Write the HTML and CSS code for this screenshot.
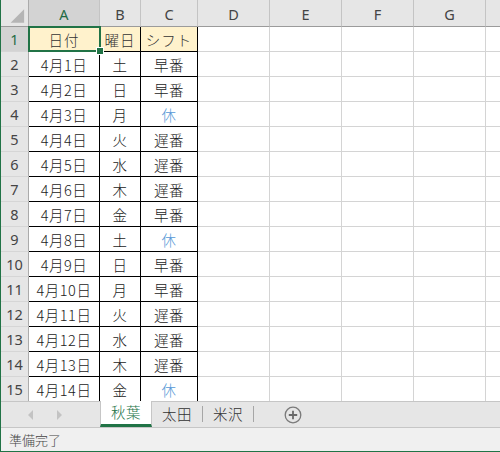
FILE: index.html
```html
<!DOCTYPE html>
<html lang="ja">
<head>
<meta charset="utf-8">
<link rel="stylesheet" href="styles.css">
</head>
<body>
<div class="window">
  <div class="sheet">
    <div class="grid">
      <div class="corner"><svg width="28" height="26" viewBox="0 0 28 26"><polygon points="24,9 24,23 10,23" fill="#b5b5b5"/></svg></div>
      <div class="ch sel">A</div><div class="ch">B</div><div class="ch">C</div><div class="ch">D</div><div class="ch">E</div><div class="ch">F</div><div class="ch">G</div><div class="ch last"></div>

      <div class="rh sel">1</div><div class="c t hd">日付</div><div class="c t hd">曜日</div><div class="c t hd">シフト</div><div class="c"></div><div class="c"></div><div class="c"></div><div class="c"></div><div class="c last"></div>
      <div class="rh">2</div><div class="c t">4月1日</div><div class="c t">土</div><div class="c t">早番</div><div class="c"></div><div class="c"></div><div class="c"></div><div class="c"></div><div class="c last"></div>
      <div class="rh">3</div><div class="c t">4月2日</div><div class="c t">日</div><div class="c t">早番</div><div class="c"></div><div class="c"></div><div class="c"></div><div class="c"></div><div class="c last"></div>
      <div class="rh">4</div><div class="c t">4月3日</div><div class="c t">月</div><div class="c t off">休</div><div class="c"></div><div class="c"></div><div class="c"></div><div class="c"></div><div class="c last"></div>
      <div class="rh">5</div><div class="c t">4月4日</div><div class="c t">火</div><div class="c t">遅番</div><div class="c"></div><div class="c"></div><div class="c"></div><div class="c"></div><div class="c last"></div>
      <div class="rh">6</div><div class="c t">4月5日</div><div class="c t">水</div><div class="c t">遅番</div><div class="c"></div><div class="c"></div><div class="c"></div><div class="c"></div><div class="c last"></div>
      <div class="rh">7</div><div class="c t">4月6日</div><div class="c t">木</div><div class="c t">遅番</div><div class="c"></div><div class="c"></div><div class="c"></div><div class="c"></div><div class="c last"></div>
      <div class="rh">8</div><div class="c t">4月7日</div><div class="c t">金</div><div class="c t">早番</div><div class="c"></div><div class="c"></div><div class="c"></div><div class="c"></div><div class="c last"></div>
      <div class="rh">9</div><div class="c t">4月8日</div><div class="c t">土</div><div class="c t off">休</div><div class="c"></div><div class="c"></div><div class="c"></div><div class="c"></div><div class="c last"></div>
      <div class="rh">10</div><div class="c t">4月9日</div><div class="c t">日</div><div class="c t">早番</div><div class="c"></div><div class="c"></div><div class="c"></div><div class="c"></div><div class="c last"></div>
      <div class="rh">11</div><div class="c t">4月10日</div><div class="c t">月</div><div class="c t">早番</div><div class="c"></div><div class="c"></div><div class="c"></div><div class="c"></div><div class="c last"></div>
      <div class="rh">12</div><div class="c t">4月11日</div><div class="c t">火</div><div class="c t">遅番</div><div class="c"></div><div class="c"></div><div class="c"></div><div class="c"></div><div class="c last"></div>
      <div class="rh">13</div><div class="c t">4月12日</div><div class="c t">水</div><div class="c t">遅番</div><div class="c"></div><div class="c"></div><div class="c"></div><div class="c"></div><div class="c last"></div>
      <div class="rh">14</div><div class="c t">4月13日</div><div class="c t">木</div><div class="c t">遅番</div><div class="c"></div><div class="c"></div><div class="c"></div><div class="c"></div><div class="c last"></div>
      <div class="rh">15</div><div class="c t">4月14日</div><div class="c t">金</div><div class="c t off">休</div><div class="c"></div><div class="c"></div><div class="c"></div><div class="c"></div><div class="c last"></div>
    </div>
    <div class="selection"><span class="handle"></span></div>
  </div>

  <div class="tabbar">
    <div class="nav">
      <svg width="6" height="10" viewBox="0 0 6 10"><polygon points="5,0 5,10 0,5" fill="#c3c3c3"/></svg>
      <svg width="6" height="10" viewBox="0 0 6 10"><polygon points="1,0 1,10 6,5" fill="#c3c3c3"/></svg>
    </div>
    <div class="tab active">秋葉</div>
    <div class="tab">太田</div>
    <div class="sep"></div>
    <div class="tab">米沢</div>
    <div class="sep"></div>
    <div class="add">
      <svg width="18" height="18" viewBox="0 0 18 18"><circle cx="9" cy="9" r="7.8" fill="none" stroke="#7a7a7a" stroke-width="1.3"/><path d="M9 4.8V13.2M4.8 9H13.2" stroke="#6a6a6a" stroke-width="1.8"/></svg>
    </div>
  </div>

  <div class="status">準備完了</div>
</div>
</body>
</html>
```

FILE: styles.css
```css
html, body {
  margin: 0;
  padding: 0;
}

body {
  width: 500px;
  height: 452px;
  overflow: hidden;
  background: #ffffff;
  font-family: "Noto Sans CJK JP", "Noto Sans", sans-serif;
}

.window {
  box-sizing: border-box;
  width: 500px;
  height: 452px;
  border-left: 1px solid #217346;
  border-bottom: 1px solid #217346;
  display: flex;
  flex-direction: column;
}

.sheet {
  position: relative;
  height: 401px;
  overflow: hidden;
}

.grid {
  display: grid;
  grid-template-columns: 28px 71px 41px 57px 72px 72px 72px 72px 1fr;
  grid-template-rows: 27px repeat(15, 25px);
}

.grid > div {
  box-sizing: border-box;
  display: flex;
  align-items: center;
  justify-content: center;
}

.corner {
  background: #e6e6e6;
  border-right: 1px solid #ababab;
  border-bottom: 1px solid #9b9b9b;
  align-items: flex-start !important;
  justify-content: flex-start !important;
}

.corner svg {
  display: block;
}

.ch {
  background: #e6e6e6;
  border-right: 1px solid #c4c4c4;
  border-bottom: 1px solid #9b9b9b;
  color: #444444;
  font-family: "Noto Sans", "Open Sans", sans-serif;
  font-size: 14.5px;
  padding-top: 1px;
}

.ch.sel {
  background: #d3d3d3;
  color: #1f6b43;
}

.ch.last {
  border-right: none;
}

.rh {
  background: #e6e6e6;
  border-right: 1px solid #ababab;
  border-bottom: 1px solid #d6d6d6;
  color: #444444;
  font-family: "Noto Sans", "Open Sans", sans-serif;
  font-size: 14.5px;
}

.rh.sel {
  background: #d3d3d3;
  color: #1f6b43;
}

.c {
  border-right: 1px solid #d4d4d4;
  border-bottom: 1px solid #d4d4d4;
  color: #1a1a1a;
  font-size: 14.5px;
  font-weight: 300;
  letter-spacing: 0.5px;
}

.c.last {
  border-right: none;
}

.c.t {
  border-right-color: #000000;
  border-bottom-color: #000000;
}

.c.hd {
  background: #fff2cc;
  color: #333333;
  letter-spacing: 1px;
}

.c.off {
  color: #5597d6;
}

.selection {
  position: absolute;
  left: 27px;
  top: 26px;
  width: 73px;
  height: 26px;
  box-sizing: border-box;
  border: 2px solid #217346;
  pointer-events: none;
}

.handle {
  position: absolute;
  right: -5px;
  bottom: -5px;
  width: 6px;
  height: 6px;
  background: #217346;
  border: 1px solid #ffffff;
}

.tabbar {
  box-sizing: border-box;
  height: 27px;
  background: #e6e6e6;
  border-top: 1px solid #c6c6c6;
  border-bottom: 1px solid #c6c6c6;
  display: flex;
  align-items: stretch;
}

.nav {
  width: 99px;
  display: flex;
  align-items: center;
  gap: 22px;
  padding-left: 27px;
  box-sizing: border-box;
}

.nav svg {
  display: block;
}

.tab {
  display: flex;
  align-items: center;
  justify-content: center;
  padding: 0 0 2px;
  width: 50px;
  font-size: 14.5px;
  font-weight: 300;
  color: #333333;
  letter-spacing: 0.5px;
}

.tab.active {
  width: 52px;
  box-sizing: border-box;
  background: #ffffff;
  color: #217346;
  margin-top: -1px;
  border-left: 1px solid #c6c6c6;
  border-right: 1px solid #c6c6c6;
  border-bottom: 3px solid #217346;
}

.sep {
  width: 1px;
  background: #a6a6a6;
  margin: 4px 0 5px;
}

.add {
  display: flex;
  align-items: center;
  margin-left: 30px;
}

.add svg {
  display: block;
}

.status {
  flex: 1;
  background: #f0f0f0;
  color: #444444;
  font-size: 13px;
  font-weight: 300;
  padding-left: 8px;
  display: flex;
  align-items: center;
}
```
